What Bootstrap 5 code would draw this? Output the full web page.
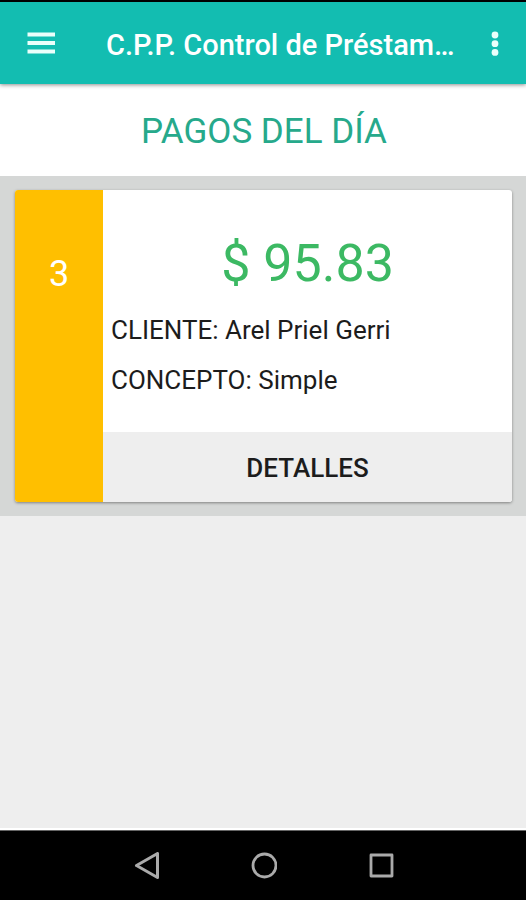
<!DOCTYPE html>
<html lang="es">
<head>
<meta charset="utf-8">
<meta name="viewport" content="width=device-width, initial-scale=1">
<title>C.P.P. Control de Préstamos</title>
<link href="https://cdn.jsdelivr.net/npm/bootstrap@5.3.0/dist/css/bootstrap.min.css" rel="stylesheet">
<style>
body { font-family: Roboto, "Liberation Sans", sans-serif; background: #eee; color: #1c1c1c; }
.app-bar { background: #13bdb1; border-top: 2px solid #000; height: 84px; padding: 0 14px 0 24px; box-shadow: 0 1px 4px rgba(0,0,0,.45); z-index: 1; }
.app-bar svg, .system-bar svg { display: block; }
.app-title { font-size: 29px; line-height: 36px; font-weight: 500; margin-left: 48px; padding-top: 4px; }
.day-title { background: #fff; color: #26a98b; font-size: 35px; line-height: 40px; padding: 28px 0 24px 2px; }
.payments { background: #d5d7d6; padding: 14px 14px 14px 15px; }
.payment { border-radius: 3px; box-shadow: 0 1px 3px rgba(0,0,0,.4); background: #fff; }
.day-count { background: #ffbf00; color: #fff; width: 88px; font-size: 36px; line-height: 40px; padding-top: 64px; }
.amount { color: #3cb963; font-size: 52px; line-height: 60px; padding-top: 44px; }
.facts { font-size: 26px; line-height: 30px; padding: 21px 8px 37px; gap: 20px; }
.details { background: #eee; font-size: 26px; line-height: 30px; font-weight: 500; padding: 21px 0 19px; color: #1c1c1c; }
.details:hover { background: #e2e2e2; }
.system-bar { background: #000; height: 70px; gap: 89px; border-top: 1px solid #666; box-shadow: 0 -2px #fff; }
</style>
<script src="https://cdn.jsdelivr.net/npm/bootstrap@5.3.0/dist/js/bootstrap.bundle.min.js"></script>
</head>
<body class="d-flex flex-column min-vh-100">
<header class="app-bar d-flex align-items-center position-relative text-white">
  <button type="button" class="btn p-0 border-0 flex-shrink-0" aria-label="Menú">
    <svg width="34" height="34" viewBox="0 0 34 34" fill="#eafffb"><path d="M3.500 6.500h27.500v4h-27.500zM3.500 15h27.500v4h-27.500zM3.500 23.500h27.500v4h-27.500z"/></svg>
  </button>
  <h1 class="app-title text-truncate flex-grow-1 mb-0">C.P.P. Control de Préstam…</h1>
  <button type="button" class="btn p-0 border-0 flex-shrink-0" aria-label="Más opciones">
    <svg width="34" height="34" viewBox="0 0 34 34" fill="#eafffb"><circle cx="17" cy="9" r="3.400"/><circle cx="17" cy="17.700" r="3.400"/><circle cx="17" cy="26.400" r="3.400"/></svg>
  </button>
</header>
<main class="flex-grow-1">
  <h2 class="day-title text-center fw-normal mb-0">PAGOS DEL DÍA</h2>
  <section class="payments">
    <article class="payment d-flex overflow-hidden">
      <div class="day-count text-center flex-shrink-0">3</div>
      <div class="flex-grow-1 d-flex flex-column">
        <div class="amount text-center">$ 95.83</div>
        <div class="facts d-flex flex-column">
          <div>CLIENTE: Arel Priel Gerri</div>
          <div>CONCEPTO: Simple</div>
        </div>
        <button type="button" class="details btn rounded-0 border-0 w-100">DETALLES</button>
      </div>
    </article>
  </section>
</main>
<nav class="system-bar d-flex justify-content-center align-items-center" aria-label="Sistema">
  <button type="button" class="btn p-0 border-0" aria-label="Atrás">
    <svg width="28" height="28" viewBox="0 0 28 28" fill="none" stroke="#aaa" stroke-width="3" stroke-linejoin="round"><path d="M4.500 13.500L25.500 1.500V25.500Z"/></svg>
  </button>
  <button type="button" class="btn p-0 border-0" aria-label="Inicio">
    <svg width="28" height="28" viewBox="0 0 28 28" fill="none" stroke="#aaa" stroke-width="2.800"><circle cx="15.500" cy="13.500" r="11.500"/></svg>
  </button>
  <button type="button" class="btn p-0 border-0" aria-label="Recientes">
    <svg width="28" height="28" viewBox="0 0 28 28" fill="none" stroke="#aaa" stroke-width="2.800" stroke-linejoin="round"><path d="M5 3h21v21h-21z"/></svg>
  </button>
</nav>
</body>
</html>
